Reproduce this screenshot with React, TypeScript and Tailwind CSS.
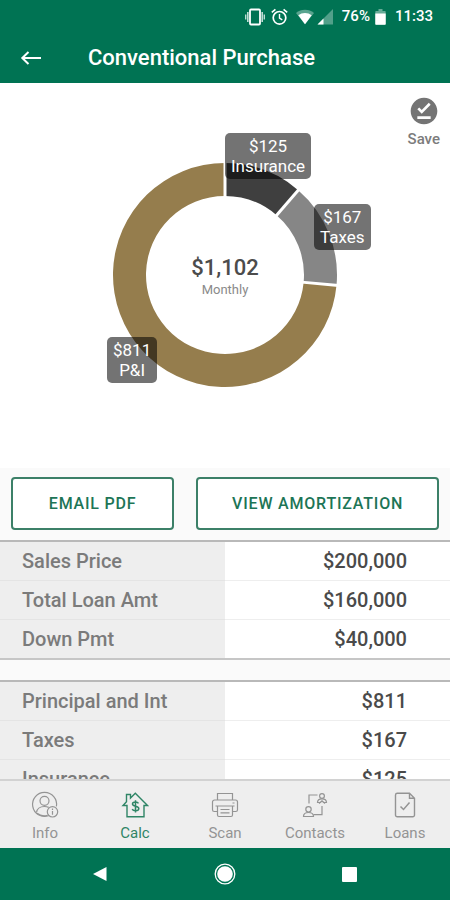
import type { ReactNode } from "react";
import { MdOfflinePin } from "react-icons/md";

type Slice = { label: string; amount: number; color: string; place: string };

const slices: Slice[] = [
  { label: "Insurance", amount: 125, color: "#3f3f3f", place: "left-[135px] top-0" },
  { label: "Taxes", amount: 167, color: "#868686", place: "left-[224px] top-[71px]" },
  { label: "P&I", amount: 811, color: "#957d4d", place: "left-[17px] top-[204px]" },
];

const loanRows = [
  ["Sales Price", "$200,000"],
  ["Total Loan Amt", "$160,000"],
  ["Down Pmt", "$40,000"],
];

const paymentRows = [
  ["Principal and Int", "$811"],
  ["Taxes", "$167"],
  ["Insurance", "$125"],
];

function StatusBar() {
  return (
    <div className="flex h-[33px] items-center justify-end pr-[17px] text-[15px] leading-none font-medium text-white">
      <svg className="mr-[6px]" width="20" height="18" viewBox="0 0 20 18" fill="none" stroke="#fff" aria-hidden="true">
        <rect x="5" y="1.5" width="10" height="15" rx="1" strokeWidth="1.8" />
        <path d="M2.800 4v10M17.200 4v10" strokeWidth="1.6" strokeOpacity=".75" />
        <path d="M.7 6.500v5M19.300 6.500v5" strokeWidth="1.4" strokeOpacity=".75" />
      </svg>
      <svg className="mr-[8px]" width="17" height="18" viewBox="0 0 17 18" fill="none" stroke="#fff" aria-hidden="true">
        <circle cx="8.500" cy="9.800" r="6.300" strokeWidth="1.7" />
        <path d="M8.500 6v4.200l2.800 1.600" strokeWidth="1.4" />
        <path d="M.8 4.400 4.400 1.300M16.200 4.400 12.600 1.300" strokeWidth="1.6" />
      </svg>
      <svg className="mr-[3px]" width="18" height="16" viewBox="0 0 18 16" aria-hidden="true">
        <path d="M0 4a14 14 0 0 1 18 0L9 15.300Z" fill="#fff" fillOpacity=".35" />
        <path d="M2.300 6.200a11 11 0 0 1 13.400 0L9 15.300Z" fill="#fff" />
      </svg>
      <svg className="mr-[9px]" width="16" height="16" viewBox="0 0 16 16" aria-hidden="true">
        <path d="M16 0v15.500H.5Z" fill="#fff" fillOpacity=".32" />
        <path d="M6.500 9.500v6h-6Z" fill="#fff" />
      </svg>
      <span>76%</span>
      <svg className="mr-[9px] ml-[5px]" width="11" height="16" viewBox="0 0 11 16" aria-hidden="true">
        <path d="M3.500 0h4v2H10a.7.7 0 0 1 .7.7V15a.7.7 0 0 1-.7.7H1A.7.7 0 0 1 .3 15V2.700A.7.7 0 0 1 1 2h2.500Z" fill="#fff" fillOpacity=".4" />
        <path d="M.3 4.500h10.400V15a.7.7 0 0 1-.7.7H1A.7.7 0 0 1 .3 15Z" fill="#fff" />
      </svg>
      <span>11:33</span>
    </div>
  );
}

function PaymentChart() {
  const total = slices.reduce((sum, s) => sum + s.amount, 0);
  const cx = 135;
  const cy = 142;
  const outer = 112;
  const inner = 79;
  const point = (r: number, share: number) => {
    const a = share * 2 * Math.PI - Math.PI / 2;
    return `${(cx + r * Math.cos(a)).toFixed(2)} ${(cy + r * Math.sin(a)).toFixed(2)}`;
  };
  let from = 0;
  const arcs = slices.map((s) => {
    const to = from + s.amount / total;
    const large = to - from > 0.5 ? 1 : 0;
    const d = `M${point(outer, from)}A${outer} ${outer} 0 ${large} 1 ${point(outer, to)}L${point(inner, to)}A${inner} ${inner} 0 ${large} 0 ${point(inner, from)}Z`;
    const edge = `M${point(inner - 2, from)}L${point(outer + 2, from)}`;
    from = to;
    return { d, edge, color: s.color };
  });
  return (
    <div className="relative h-[256px] w-[270px]">
      <svg className="block" width="270" height="256" viewBox="0 0 270 256" aria-hidden="true">
        {arcs.map((a) => (
          <path key={a.d} d={a.d} fill={a.color} />
        ))}
        {arcs.map((a) => (
          <path key={a.edge} d={a.edge} stroke="#fff" strokeWidth="3" />
        ))}
      </svg>
      <div className="absolute inset-x-0 top-[121px] text-center">
        <p className="text-[22px] leading-7 font-medium text-[#4c4c4c]">$1,102</p>
        <p className="text-[13px] leading-4 text-[#8a8a8a]">Monthly</p>
      </div>
      {slices.map((s) => (
        <p
          key={s.label}
          className={`absolute rounded-[5px] bg-black/55 px-[6px] py-[3px] text-center text-[17px] leading-5 text-white ${s.place}`}
        >
          ${s.amount}
          <br />
          {s.label}
        </p>
      ))}
    </div>
  );
}

function FigureTable({ caption, rows }: { caption: string; rows: string[][] }) {
  return (
    <table
      aria-label={caption}
      className="w-full table-fixed border-separate border-spacing-0 border-y-2 border-t-[#b9b9b9] border-b-[#c6c6c6] text-[20px] leading-6 font-medium"
    >
      <tbody>
        {rows.map(([name, value], i) => {
          const line = i < rows.length - 1 ? "border-b" : "";
          return (
            <tr key={name} className="h-[39px] last:h-[38px]">
              <th scope="row" className={`border-[#e4e4e4] bg-[#eeeeee] py-0 pl-[22px] text-left font-medium text-[#7b7b7b] ${line}`}>
                {name}
              </th>
              <td className={`border-[#eeeeee] bg-white py-0 pr-[43px] text-right text-[#4a4a4a] ${line}`}>{value}</td>
            </tr>
          );
        })}
      </tbody>
    </table>
  );
}

function Tab({ label, active, children }: { label: string; active?: boolean; children: ReactNode }) {
  return (
    <a
      href={`#${label.toLowerCase()}`}
      aria-current={active ? "page" : undefined}
      className={`flex flex-1 flex-col items-center gap-[4px] pt-[10px] text-[15px] leading-5 ${active ? "text-[#2f8566]" : "text-[#949494]"}`}
    >
      <svg width="28" height="28" viewBox="0 0 28 28" fill="none" stroke="currentColor" strokeWidth="1.2" aria-hidden="true">
        {children}
      </svg>
      {label}
    </a>
  );
}

export default function App() {
  return (
    <div className="flex h-screen flex-col bg-[#fafafa] font-['Roboto',sans-serif]">
      <header className="shrink-0 bg-[#007353]">
        <StatusBar />
        <div className="flex h-[50px] items-center pl-[20px]">
          <button type="button" aria-label="Back" className="mr-[46px]">
            <svg width="22" height="16" viewBox="0 0 22 16" fill="none" stroke="#fff" strokeWidth="2" aria-hidden="true">
              <path d="M21 8H2.500M8.500 2 2.300 8l6.200 6" />
            </svg>
          </button>
          <h1 className="text-[22px] leading-7 font-medium text-white">Conventional Purchase</h1>
        </div>
      </header>

      <main className="min-h-0 flex-1 overflow-x-hidden overflow-y-auto [scrollbar-width:none]">
        <section className="relative flex h-[385px] justify-center bg-white pt-[50px]">
          <PaymentChart />
          <button type="button" className="absolute top-[12px] right-[10px] flex flex-col items-center text-[15px] leading-6 font-medium text-[#7c7c7c]">
            <MdOfflinePin size={32} color="#747474" />
            Save
          </button>
        </section>

        <div className="flex gap-[22px] px-[11px] pt-[9px] pb-[10px] text-[16px] font-medium tracking-wider text-[#1d7556]">
          <button type="button" className="h-[53px] flex-2 rounded-[4px] border-2 border-[#3c8068] bg-white">
            EMAIL PDF
          </button>
          <button type="button" className="h-[53px] flex-3 rounded-[4px] border-2 border-[#3c8068] bg-white">
            VIEW AMORTIZATION
          </button>
        </div>

        <div className="flex flex-col gap-[20px]">
          <FigureTable caption="Loan amounts" rows={loanRows} />
          <FigureTable caption="Monthly payment" rows={paymentRows} />
        </div>
      </main>

      <nav className="flex h-[69px] shrink-0 border-t-2 border-[#d2d2d2] bg-[#eeeeee]">
        <Tab label="Info">
          <path d="M17.500 24.700a12 12 0 1 1 7.900-9.300" />
          <circle cx="13.500" cy="9.800" r="4.500" />
          <path d="M5.500 21.500c.6-4 3.600-6 8-6 1.600 0 3 .3 4.200.9M6 22.300c3 2.400 7 3.200 10.500 2" />
          <circle cx="21.500" cy="20.800" r="5.200" />
          <path d="M21.500 20v3.800M21.500 17.600v1.300" />
        </Tab>
        <Tab label="Calc" active>
          <path strokeWidth="1.400" d="M6 14.500v11.300h17V14.500h3.500L14.300 2.300 9.500 7V3.500H5.500v7.300L2 14.500Z" />
          <path strokeWidth="1.500" d="M17.500 12.300c-.6-1-1.600-1.400-3-1.400-1.800 0-3 .8-3 2.100 0 3 6.300 1.400 6.300 4.500 0 1.500-1.300 2.300-3.200 2.300-1.600 0-2.900-.6-3.400-1.700M14.500 9.200v12.400" />
        </Tab>
        <Tab label="Scan">
          <path d="M6.500 9V2.500h15V9M6.500 20.500H3.300A1.800 1.800 0 0 1 1.500 18.700V11a2 2 0 0 1 2-2h21a2 2 0 0 1 2 2v7.700a1.800 1.800 0 0 1-1.800 1.800h-3.200" />
          <path d="M4.500 15h19M6.500 15v9a1.500 1.500 0 0 0 1.500 1.500h12a1.500 1.500 0 0 0 1.500-1.500v-9M9.500 18.500h9M9.500 21.800h9M21.500 12h2" />
        </Tab>
        <Tab label="Contacts">
          <path d="M8 12.500V4h8.500M12.500 23.700H21V15" />
          <circle cx="7.500" cy="18.300" r="2.700" />
          <path d="M2.500 25.500c0-2.700 2-4 5-4s5 1.300 5 4Z" />
          <circle cx="21" cy="5" r="2.400" />
          <path d="M16.500 11.500c0-2.500 1.800-3.700 4.500-3.700s4.500 1.200 4.500 3.700h-3L21 9.800l-1.500 1.700ZM18 12.500 21 9.800l3 2.700" />
        </Tab>
        <Tab label="Loans">
          <path strokeWidth="1.400" d="M18.500 2.300H6.300A1.800 1.800 0 0 0 4.500 4v20a1.800 1.800 0 0 0 1.800 1.800h15.400a1.800 1.800 0 0 0 1.800-1.800V7.300ZM18.500 2.300v5h5" />
          <path strokeWidth="1.500" d="m9.500 15.500 3 3 6-7" />
        </Tab>
      </nav>

      <div className="grid h-[52px] shrink-0 grid-cols-[1fr_auto_1fr] items-center bg-[#007353]">
        <button type="button" aria-label="Back" className="mr-[105px] justify-self-end">
          <svg width="16" height="16" viewBox="0 0 16 16" fill="#fff" aria-hidden="true">
            <path d="M1 8 14.500 1v14Z" />
          </svg>
        </button>
        <button type="button" aria-label="Home">
          <svg width="24" height="24" viewBox="0 0 24 24" fill="none" aria-hidden="true">
            <circle cx="12" cy="12" r="9.800" stroke="#fff" strokeWidth="1.300" />
            <circle cx="12" cy="12" r="7.800" fill="#fff" />
          </svg>
        </button>
        <button type="button" aria-label="Recent apps" className="ml-[105px] size-[15px] justify-self-start rounded-[1px] bg-white" />
      </div>
    </div>
  );
}
